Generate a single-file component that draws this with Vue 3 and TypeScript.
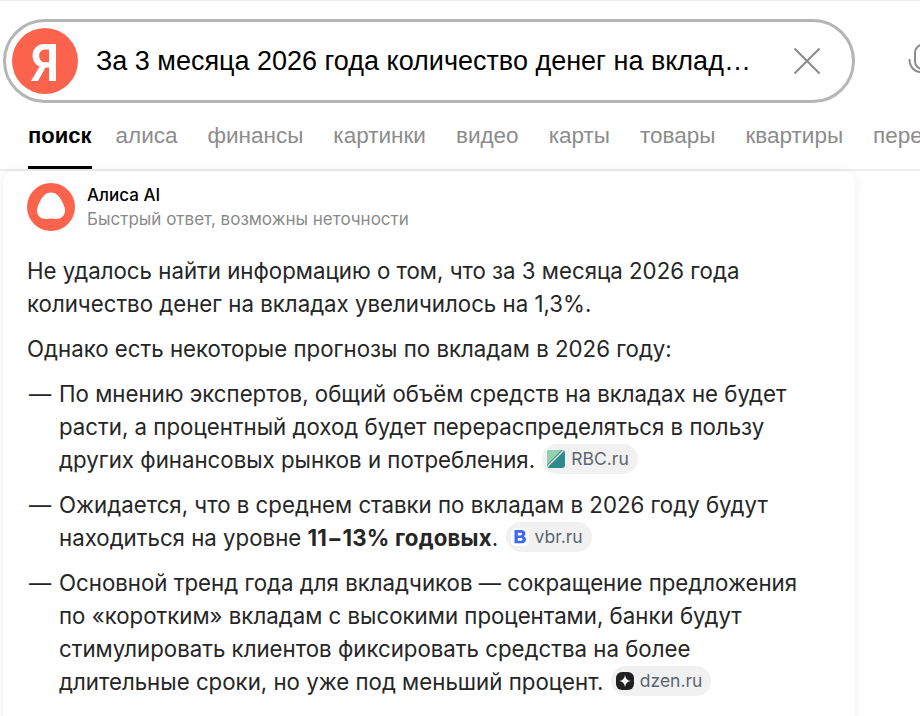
<template>
  <div class="page">
    <header class="search-row">
      <div class="search-box">
        <div class="logo">
          <svg width="66" height="66" viewBox="0 0 66 66">
            <circle cx="33" cy="33" r="33" fill="#fc634c" />
            <path d="M37 53V39.500h-3.500L26 53h-7l8.500-14.500c-4.300-1.900-6.900-5.500-6.900-11 0-7 4.800-11.500 12.200-11.500H44v37z M37 21.500h-3.500c-4 0-6.300 2.400-6.300 6.200 0 4 2.300 6.600 6.500 6.600H37z" fill="#fff" fill-rule="evenodd" />
          </svg>
        </div>
        <span class="query">За 3 месяца 2026 года количество денег на вклад…</span>
        <svg class="clear" width="28" height="28" viewBox="0 0 28 28">
          <path d="M1.500 1.500l25 25M26.500 1.500l-25 25" stroke="#8b8b8b" stroke-width="2" fill="none" />
        </svg>
      </div>
      <svg class="mic" width="24" height="34" viewBox="0 0 24 34">
        <rect x="7" y="1" width="15" height="24" rx="7.500" stroke="#8b8b8b" stroke-width="2" fill="none" />
        <path d="M1.500 15c0 8 5 13.500 13 13.500" stroke="#8b8b8b" stroke-width="2" fill="none" />
      </svg>
    </header>

    <nav class="tabs">
      <a v-for="tab in tabs" :key="tab" class="tab" :class="{ active: tab === 'поиск' }">{{ tab }}</a>
    </nav>

    <main class="card">
      <div class="card-head">
        <svg width="48" height="48" viewBox="0 0 48 48">
          <circle cx="24" cy="24" r="24" fill="#fc634c" />
          <path d="M24 9.500c4.500 0 7.600 2.800 10 7 2 3.500 4 7.500 4 11 0 5-4 8.500-9 8.500-2 0-3-.6-5-.6s-3 .6-5 .6c-5 0-9-3.500-9-8.500 0-3.500 2-7.500 4-11 2.400-4.200 5.500-7 10-7z" fill="#fff" />
        </svg>
        <div class="head-text">
          <div class="head-title">Алиса AI</div>
          <div class="head-sub">Быстрый ответ, возможны неточности</div>
        </div>
      </div>

      <p class="para">Не удалось найти информацию о том, что за 3 месяца 2026 года количество денег на вкладах увеличилось на 1,3%.</p>
      <p class="para">Однако есть некоторые прогнозы по вкладам в 2026 году:</p>

      <ul class="list">
        <li>
          По мнению экспертов, общий объём средств на вкладах не будет расти, а процентный доход будет перераспределяться в пользу других финансовых рынков и потребления.
          <span class="source">
            <svg width="18" height="18" viewBox="0 0 18 18">
              <rect width="18" height="18" rx="3" fill="#2f8a8c" />
              <path d="M0 3a3 3 0 0 1 3-3h11.500L0 15z" fill="#93d1ae" />
              <path d="M0.500 16.500L16.500 0.500" stroke="#f1f1f1" stroke-width="1.200" />
            </svg>
            RBC.ru
          </span>
        </li>
        <li>
          Ожидается, что в среднем ставки по вкладам в 2026 году будут находиться на уровне <b>11−13% годовых</b>.
          <span class="source">
            <svg width="18" height="18" viewBox="0 0 18 18">
              <rect width="18" height="18" rx="5" fill="#fff" />
              <path d="M3.500 2h6.500c2.800 0 4.400 1.300 4.400 3.500 0 1.300-.7 2.400-1.800 2.800 1.500.4 2.400 1.600 2.400 3.100 0 2.400-1.700 3.900-4.600 3.900H3.500zM6.800 4.800v2.600h2.500c1 0 1.700-.5 1.700-1.300s-.6-1.300-1.700-1.300zM6.800 10v2.800h2.800c1.200 0 1.900-.5 1.900-1.400s-.7-1.400-1.900-1.400z" fill="#3f68f5" fill-rule="evenodd" />
            </svg>
            vbr.ru
          </span>
        </li>
        <li>
          Основной тренд года для вкладчиков — сокращение предложения по «коротким» вкладам с высокими процентами, банки будут стимулировать клиентов фиксировать средства на более длительные сроки, но уже под меньший процент.
          <span class="source">
            <svg width="18" height="18" viewBox="0 0 18 18">
              <rect width="18" height="18" rx="6" fill="#202022" />
              <path d="M9 3c.3 3.500 2.500 5.700 6 6-3.500.3-5.700 2.500-6 6-.3-3.500-2.500-5.700-6-6 3.500-.3 5.700-2.500 6-6z" fill="#fff" />
            </svg>
            dzen.ru
          </span>
        </li>
      </ul>
    </main>
  </div>
</template>

<script setup lang="ts">
const tabs: string[] = ['поиск', 'алиса', 'финансы', 'картинки', 'видео', 'карты', 'товары', 'квартиры', 'перевод']
</script>

<style>
html,
body {
  margin: 0;
  overflow: hidden;
  background: #fff;
}
</style>

<style scoped>
.page {
  width: 920px;
  height: 716px;
  overflow: hidden;
  border-top: 1px solid #eeeeee;
  box-sizing: border-box;
}

.search-row {
  display: flex;
  align-items: center;
  padding: 18px 0 0 3px;
}

.search-box {
  width: 852px;
  height: 84px;
  flex: none;
  box-sizing: border-box;
  border: 3px solid #b5b5b5;
  border-radius: 42px;
  display: flex;
  align-items: center;
  padding-left: 6px;
}

.logo {
  width: 66px;
  height: 66px;
  flex: none;
  display: flex;
}

.query {
  margin-left: 18px;
  flex: 1;
  font: 27px "Liberation Sans", Arial, sans-serif;
  color: #000;
  white-space: nowrap;
}

.clear {
  margin-right: 31px;
  flex: none;
}

.mic {
  margin-left: 53px;
  flex: none;
}

.tabs {
  display: flex;
  gap: 30px;
  height: 66px;
  padding: 0 0 0 28px;
  border-bottom: 2px solid #eeeeee;
  overflow: hidden;
  box-sizing: content-box;
}

.tab {
  font: 22.500px/66px "Liberation Sans", Arial, sans-serif;
  color: #8c8c8c;
  white-space: nowrap;
  flex: none;
  height: 66px;
  box-sizing: border-box;
}

.tab.active {
  color: #000;
  font-weight: 700;
  font-size: 22px;
  margin-right: -6px;
  border-bottom: 3px solid #000;
}

.card {
  margin-left: 3px;
  width: 852px;
  height: 560px;
  box-sizing: border-box;
  padding: 12px 24px 0;
  background: #fff;
  border-radius: 12px 12px 0 0;
  box-shadow: 0 0 12px rgba(0, 0, 0, 0.07);
  font-family: Inter, "Noto Sans", sans-serif;
  color: #262626;
}

.card-head {
  display: flex;
  gap: 12px;
  align-items: flex-start;
  height: 48px;
  margin-bottom: 23px;
}

.head-text {
  padding-top: 1px;
}

.head-title {
  font-size: 17px;
  line-height: 23px;
  font-weight: 500;
  color: #000;
}

.head-sub {
  font-size: 17px;
  line-height: 25px;
  color: #8a8a8a;
}

.para {
  margin: 0 0 12px;
  font-size: 22.250px;
  line-height: 33px;
}

.list {
  list-style: none;
  margin: 0;
  padding: 0;
  width: 790px;
  font-size: 22.250px;
  line-height: 33px;
}

.list li {
  position: relative;
  padding-left: 32px;
  margin-bottom: 12px;
}

.list li::before {
  content: "—";
  position: absolute;
  left: 2px;
}

.list b {
  font-weight: 700;
  letter-spacing: 0.2px;
}

.source {
  display: inline-flex;
  align-items: center;
  gap: 6px;
  height: 30px;
  padding: 0 9px 0 5px;
  margin-left: 1px;
  border-radius: 15px;
  background: #f1f1f1;
  color: #5c6470;
  font-size: 17.500px;
  line-height: 30px;
}
</style>
